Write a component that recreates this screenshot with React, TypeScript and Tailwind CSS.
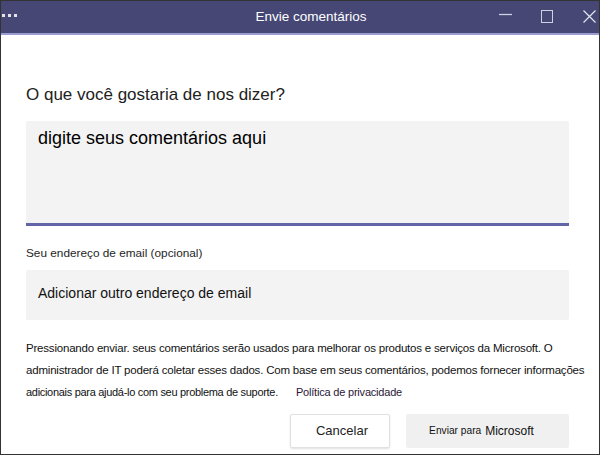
import React from 'react';

const App: React.FC = () => {
  return (
    <div
      className="w-[600px] h-[455px] bg-white border border-[#333] flex flex-col overflow-hidden"
      style={{ fontFamily: '"Liberation Sans", Arial, sans-serif' }}
    >
      {/* title bar */}
      <div className="h-[34px] bg-[#464775] border-b-2 border-[#9a9bd0] flex items-center relative shrink-0">
        <div className="flex gap-[3px] pl-[1px] -mt-[4px]">
          <span className="w-[3px] h-[3px] bg-white/85 block" />
          <span className="w-[3px] h-[3px] bg-white/85 block" />
          <span className="w-[3px] h-[3px] bg-white/85 block" />
        </div>
        <div className="absolute left-0 right-0 top-0 h-[32px] flex items-center justify-center text-white text-[13.5px] pl-[22px]">
          Envie comentários
        </div>
        <div className="ml-auto flex items-center h-full -mt-[2px]">
          <svg width="13" height="12" viewBox="0 0 13 12" className="mr-[29px] -mt-[3px]">
            <line x1="0" y1="5.5" x2="13" y2="5.5" stroke="#cfd0e2" strokeWidth="1.3" />
          </svg>
          <svg width="12" height="13" viewBox="0 0 12 13" className="mr-[30px]">
            <rect x="0.5" y="0.5" width="11" height="12" fill="none" stroke="#cfd0e2" strokeWidth="1" />
          </svg>
          <svg width="13" height="13" viewBox="0 0 13 13" className="mr-[3px]">
            <path d="M0.5 0.5 L12.5 12.5 M12.5 0.5 L0.5 12.5" stroke="#e4e4ee" strokeWidth="1.2" />
          </svg>
        </div>
      </div>

      {/* body */}
      <div className="flex flex-col px-[25px] pt-[50px]">
        <div className="text-[17px] text-[#222] leading-[20px]">O que você gostaria de nos dizer?</div>

        <div className="mt-[16px] w-[543px] h-[105px] bg-[#f3f3f3] rounded-t-[2px] border-b-[3px] border-[#6264a7] px-[12px] pt-[6px]">
          <span className="text-[18px] text-black leading-[20px]">digite seus comentários aqui</span>
        </div>

        <div className="mt-[20px] text-[11.8px] text-[#252525] leading-[14px]">
          Seu endereço de email (opcional)
        </div>

        <div className="mt-[10px] w-[543px] h-[50px] bg-[#f3f3f3] rounded-[2px] px-[12px] pt-[11px]">
          <span className="text-[14px] text-[#111] leading-[16px]">Adicionar outro endereço de email</span>
        </div>

        <div className="mt-[17px] text-[11.5px] text-[#111] leading-[22px] w-[560px] tracking-[-0.2px]">
          Pressionando enviar. seus comentários serão usados para melhorar os produtos e serviços da Microsoft. O
          administrador de IT poderá coletar esses dados. Com base em seus comentários, podemos fornecer informações
          <br />
          <span className="text-[11px] tracking-[-0.3px]">adicionais para ajudá-lo com seu problema de suporte.</span>
          <span className="ml-[18px] text-[11px] text-[#2a1636]">Política de privacidade</span>
        </div>

        <div className="mt-[11px] flex justify-end gap-[16px] w-[543px]">
          <button className="w-[100px] h-[34px] bg-white border border-[#e1e1e1] rounded-[2px] shadow-[0_1px_2px_rgba(0,0,0,0.12)] text-[13px] text-[#222] pl-[4px]">
            Cancelar
          </button>
          <button className="w-[163px] h-[34px] bg-[#f0f0f0] rounded-[2px] text-[#111] flex items-center justify-center pr-[12px]">
            <span className="text-[10.2px]">Enviar para</span>
            <span className="text-[12px] ml-[4px]">Microsoft</span>
          </button>
        </div>
      </div>
    </div>
  );
};

export default App;
